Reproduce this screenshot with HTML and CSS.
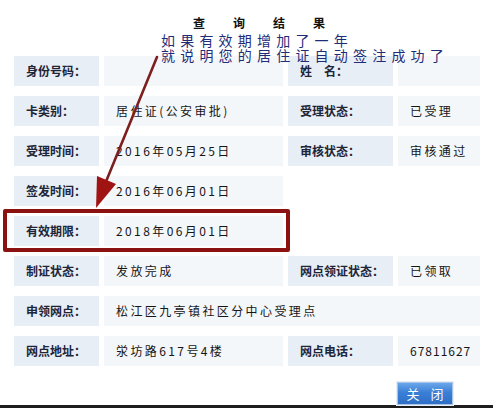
FILE: index.html
```html
<!DOCTYPE html>
<html lang="zh-CN">
<head>
<meta charset="utf-8">
<title>查询结果</title>
<link rel="stylesheet" href="styles.css">
</head>
<body>
<div class="page">
  <div class="header">
    <h1 class="title"><span>查</span><span>询</span><span>结</span><span>果</span></h1>
  </div>
  <div class="grid">
    <div class="lbl">身份号码：</div><div class="val"></div>
    <div class="lbl">姓　名：</div><div class="val"></div>

    <div class="lbl">卡类别：</div><div class="val">居住证(公安审批)</div>
    <div class="lbl">受理状态：</div><div class="val">已受理</div>

    <div class="lbl">受理时间：</div><div class="val">2016年05月25日</div>
    <div class="lbl">审核状态：</div><div class="val">审核通过</div>

    <div class="lbl">签发时间：</div><div class="val">2016年06月01日</div>
    <div class="empty"></div><div class="empty"></div>

    <div class="lbl">有效期限：</div><div class="val">2018年06月01日</div>
    <div class="empty"></div><div class="empty"></div>

    <div class="lbl">制证状态：</div><div class="val">发放完成</div>
    <div class="lbl">网点领证状态：</div><div class="val">已领取</div>

    <div class="lbl">申领网点：</div><div class="val wide">松江区九亭镇社区分中心受理点</div>

    <div class="lbl">网点地址：</div><div class="val">泶坊路617号4楼</div>
    <div class="lbl">网点电话：</div><div class="val digits">67811627</div>
  </div>
  <div class="footer">
    <button class="btn" type="button">关 闭</button>
  </div>
</div>
<div class="strip"></div>

<p class="note">如果有效期增加了一年<br>就说明您的居住证自动签注成功了</p>
<div class="highlight"></div>
<svg class="arrow" width="493" height="408" viewBox="0 0 493 408">
  <line x1="157" y1="57" x2="105" y2="184" stroke="#7d1f1f" stroke-width="2.6" stroke-linecap="round"/>
  <polygon points="97,176 116,184 96,208" fill="#a01313"/>
</svg>
</body>
</html>
```

FILE: styles.css
```css
* { box-sizing: border-box; }
html, body {
  margin: 0;
  padding: 0;
  background: #ffffff;
  font-family: "Noto Sans CJK SC", "Noto Sans", sans-serif;
  position: relative;
  width: 493px;
  height: 408px;
  overflow: hidden;
}
.page {
  height: 405px;
  display: flex;
  flex-direction: column;
}
.header {
  height: 56px;
  padding-top: 17px;
}
.title {
  margin: 0 0 0 193px;
  display: flex;
  gap: 28px;
  font-size: 12px;
  line-height: 12px;
  font-weight: 700;
  color: #111;
}
.grid {
  margin-left: 14px;
  display: grid;
  grid-template-columns: 85px 179px 105px 82px;
  column-gap: 5px;
  row-gap: 10px;
  grid-auto-rows: 30px;
}
.lbl {
  background: #e8eef6;
  font-size: 12px;
  line-height: 14px;
  font-weight: 700;
  color: #1d2538;
  display: flex;
  align-items: center;
  padding-left: 12px;
  white-space: nowrap;
}
.val {
  background: #f4f7fa;
  font-size: 12px;
  line-height: 14px;
  color: #161616;
  letter-spacing: 2.4px;
  display: flex;
  align-items: center;
  padding-left: 12px;
  white-space: nowrap;
}
.val.digits { letter-spacing: 1px; }
.val.wide { grid-column: span 3; }
.footer {
  display: flex;
  justify-content: flex-end;
  padding-right: 40px;
  margin-top: auto;
}
.btn {
  width: 56px;
  height: 23px;
  margin: 0;
  padding: 0;
  border: 1px solid #a9c4e6;
  background: linear-gradient(#6aa6ea, #3a7fd6 45%, #2f6fc6);
  color: #ffffff;
  font-family: "Noto Sans CJK SC", sans-serif;
  font-size: 13px;
  letter-spacing: 4px;
  text-indent: 4px;
  line-height: 21px;
  box-shadow: 0 0 0 1px #e6eef8;
}
.strip {
  height: 3px;
  background: #1e1e1e;
}
.note {
  position: absolute;
  left: 161px;
  top: 33px;
  margin: 0;
  font-size: 14px;
  line-height: 15px;
  letter-spacing: 5.2px;
  color: #1f2c78;
  white-space: nowrap;
}
.highlight {
  position: absolute;
  left: 3px;
  top: 209px;
  width: 287px;
  height: 43px;
  border: 4px solid #8c1212;
  border-radius: 2px;
}
.arrow {
  position: absolute;
  left: 0;
  top: 0;
  pointer-events: none;
}
```
